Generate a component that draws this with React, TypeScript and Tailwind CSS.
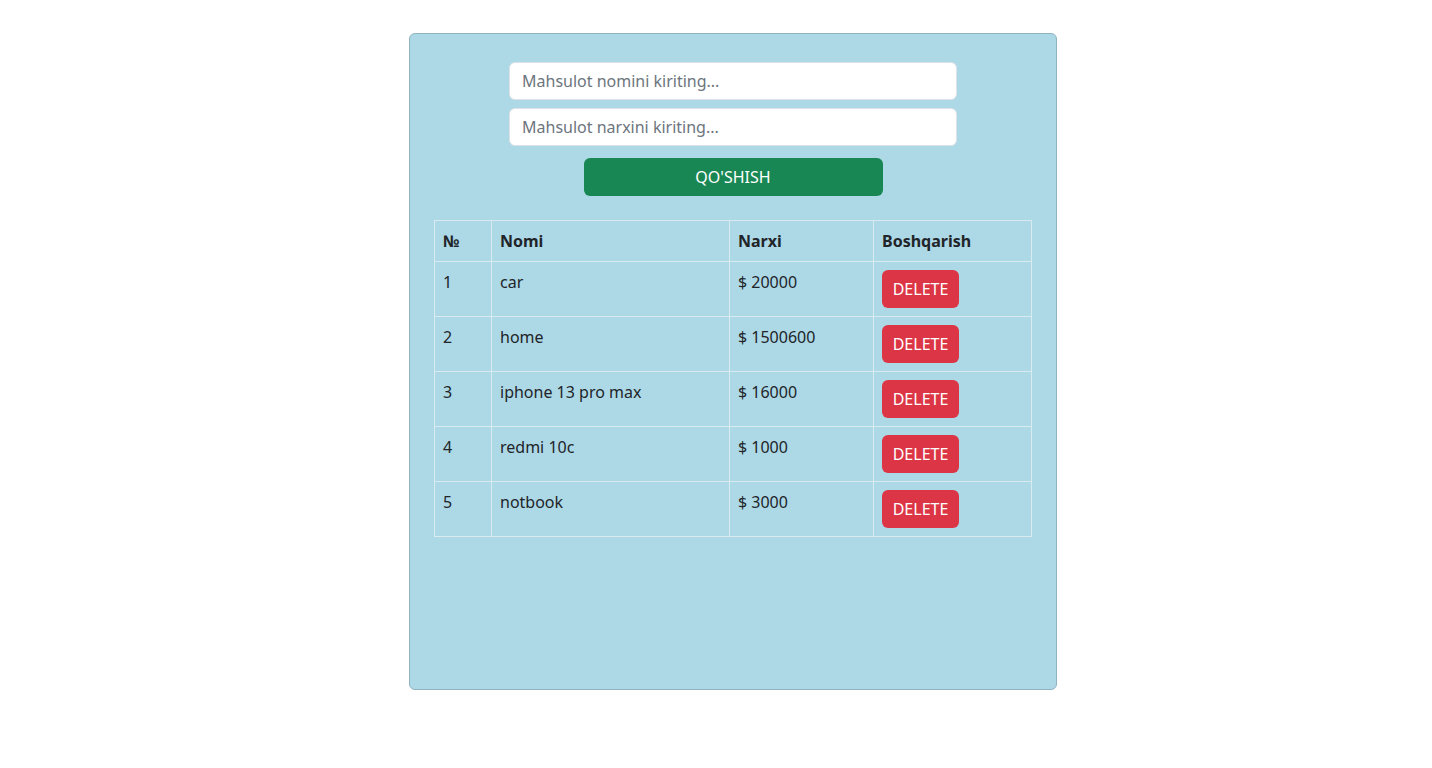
import React, { useState } from 'react';

type Product = { id: number; name: string; price: string };

const initial: Product[] = [
  { id: 1, name: 'car', price: '20000' },
  { id: 2, name: 'home', price: '1500600' },
  { id: 3, name: 'iphone 13 pro max', price: '16000' },
  { id: 4, name: 'redmi 10c', price: '1000' },
  { id: 5, name: 'notbook', price: '3000' },
];

const App = () => {
  const [products, setProducts] = useState<Product[]>(initial);
  const [name, setName] = useState('');
  const [price, setPrice] = useState('');

  const add = () => {
    if (!name || !price) return;
    setProducts([...products, { id: products.length + 1, name, price }]);
    setName('');
    setPrice('');
  };

  return (
    <div className="min-h-screen bg-white pl-[34px] pt-[33px] font-['Noto_Sans',sans-serif] text-[16px] text-[#212529]">
      <div className="mx-auto flex h-[657px] w-[648px] flex-col items-center rounded-[6px] border border-[#8fb3c0] bg-[#add8e6] px-[24px] pt-[28px]">
        <input
          value={name}
          onChange={(e) => setName(e.target.value)}
          placeholder="Mahsulot nomini kiriting..."
          className="h-[38px] w-[448px] rounded-[6px] border border-[#dee2e6] bg-white px-[12px] text-[16px] text-[#212529] outline-none placeholder:text-[#6c757d]"
        />
        <input
          value={price}
          onChange={(e) => setPrice(e.target.value)}
          placeholder="Mahsulot narxini kiriting..."
          className="mt-[8px] h-[38px] w-[448px] rounded-[6px] border border-[#dee2e6] bg-white px-[12px] text-[16px] text-[#212529] outline-none placeholder:text-[#6c757d]"
        />
        <button
          onClick={add}
          className="mt-[12px] h-[38px] w-[299px] rounded-[6px] bg-[#198754] text-[16px] text-white"
        >
          QO'SHISH
        </button>

        <table className="mt-[24px] w-[598px] border-collapse text-left">
          <thead>
            <tr>
              <th className="w-[57px] border border-[#d9ebf0] px-[8px] py-[8px] font-bold">№</th>
              <th className="w-[238px] border border-[#d9ebf0] px-[8px] py-[8px] font-bold">Nomi</th>
              <th className="w-[144px] border border-[#d9ebf0] px-[8px] py-[8px] font-bold">Narxi</th>
              <th className="border border-[#d9ebf0] px-[8px] py-[8px] font-bold">Boshqarish</th>
            </tr>
          </thead>
          <tbody>
            {products.map((p, i) => (
              <tr key={p.id}>
                <td className="border border-[#d9ebf0] px-[8px] py-[8px] align-top">{i + 1}</td>
                <td className="border border-[#d9ebf0] px-[8px] py-[8px] align-top">{p.name}</td>
                <td className="border border-[#d9ebf0] px-[8px] py-[8px] align-top">$ {p.price}</td>
                <td className="border border-[#d9ebf0] px-[8px] py-[8px] align-top">
                  <button
                    onClick={() => setProducts(products.filter((x) => x.id !== p.id))}
                    className="block h-[38px] w-[77px] rounded-[6px] bg-[#dc3545] text-[16px] text-white"
                  >
                    DELETE
                  </button>
                </td>
              </tr>
            ))}
          </tbody>
        </table>
      </div>
    </div>
  );
};

export default App;
